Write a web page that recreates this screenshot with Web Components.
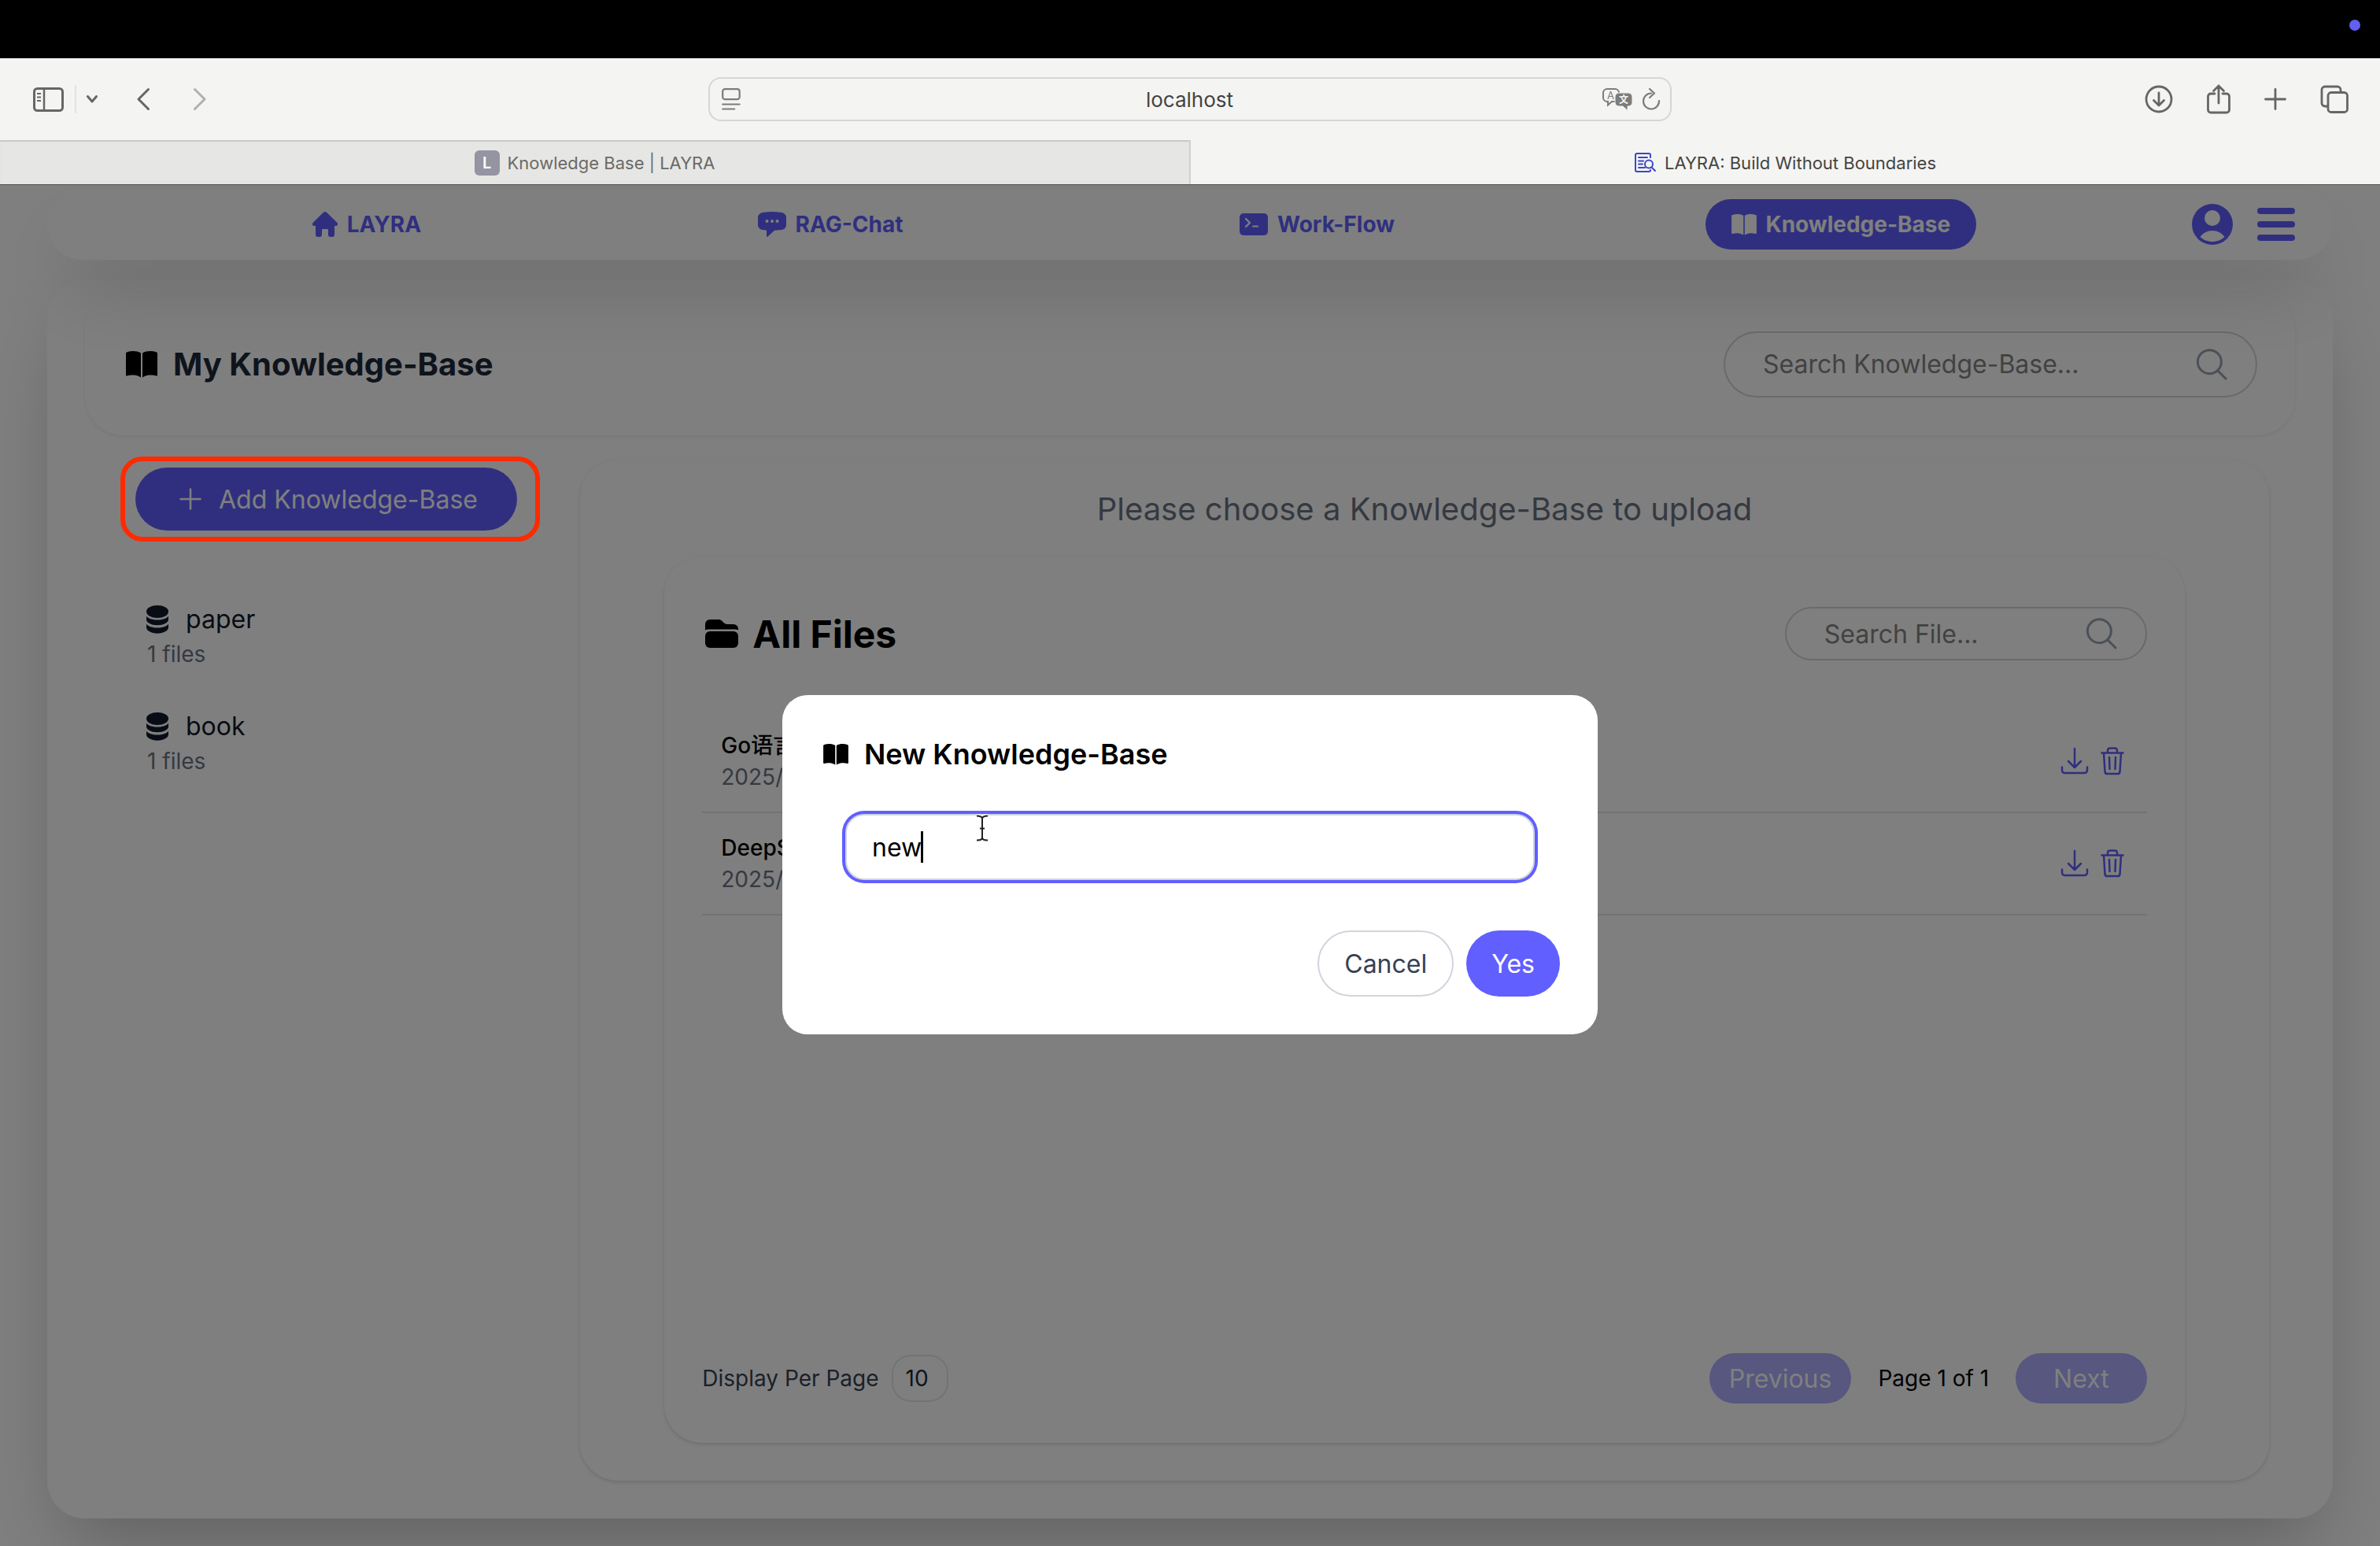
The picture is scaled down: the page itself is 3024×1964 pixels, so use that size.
<!DOCTYPE html>
<html lang="en">
<head>
<meta charset="utf-8">
<title>LAYRA: Build Without Boundaries</title>
<style>
  :root {
    --indigo: #615fff;
    --gray-200: #e5e7eb;
    --gray-300: #d1d5dc;
    --gray-400: #99a1af;
    --gray-500: #6a7282;
    --gray-700: #364153;
    --gray-800: #1e2939;
    --gray-900: #101828;
    --chrome: #f4f4f2;
    --card-shadow: 0 2px 6px rgba(0, 0, 0, 0.1), 0 2px 4px -2px rgba(0, 0, 0, 0.1);
    --deep-shadow: 0 50px 100px -24px rgba(0, 0, 0, 0.25);
  }
  body {
    margin: 0;
    font-family: Inter, "Noto Sans CJK SC", sans-serif;
    font-size: 32px;
    color: #000;
  }
</style>
</head>
<body>
<browser-window></browser-window>

<script>
// name: [width, height, svg body]
const ICONS = {
  sidebar: [40, 31, `<g fill="none" stroke="currentColor" stroke-width="3"><rect x="1.5" y="1.5" width="36" height="28" rx="4"/><path d="M14 2v27" stroke-width="2.5"/><path d="M5 8h5M5 12.500h5M5 17h5" stroke-width="2"/></g>`],
  chevron: [14, 10, `<path d="M1.500 1.500 7 8l5.500-6.500" fill="none" stroke="currentColor" stroke-width="3" stroke-linecap="round" stroke-linejoin="round"/>`],
  back: [16, 28, `<path d="M14.500 1.500 2 14l12.500 12.500" fill="none" stroke="currentColor" stroke-width="3" stroke-linecap="round" stroke-linejoin="round"/>`],
  forward: [16, 28, `<path d="M1.500 1.500 14 14 1.500 26.500" fill="none" stroke="currentColor" stroke-width="3" stroke-linecap="round" stroke-linejoin="round"/>`],
  reader: [24, 28, `<g fill="none" stroke="currentColor" stroke-width="2.200" stroke-linecap="round"><rect x="1.200" y="1.200" width="21.500" height="13" rx="3"/><path d="M1.200 20.500h21.500M1.200 26.500h15"/></g>`],
  translate: [38, 29, `<path d="M6 1h10a5 5 0 0 1 5 5v6a5 5 0 0 1-5 5h-4l-5 4.500V17H6a5 5 0 0 1-5-5V6a5 5 0 0 1 5-5z" fill="none" stroke="currentColor" stroke-width="2"/><text x="10.500" y="13.500" font-size="13" text-anchor="middle" fill="currentColor">A</text><path d="M21 6h12a5 5 0 0 1 5 5v7a5 5 0 0 1-5 5h-1v5.500L26 23h-5a5 5 0 0 1-5-5v-7a5 5 0 0 1 5-5z" fill="currentColor" stroke="#f4f4f2"/><text x="27" y="19" font-size="12" font-weight="700" text-anchor="middle" fill="#f4f4f2">文</text>`],
  reload: [24, 28, `<path d="M12 6.500A10 10 0 1 0 22 16M10 1l6 5.500-6 5.500" fill="none" stroke="currentColor" stroke-width="2.200" stroke-linecap="round" stroke-linejoin="round"/>`],
  downloads: [36, 36, `<g fill="none" stroke="currentColor" stroke-width="2.800" stroke-linecap="round" stroke-linejoin="round"><circle cx="18" cy="18" r="16"/><path d="M18 10v16M11.500 19.500 18 26l6.500-6.500"/></g>`],
  share: [30, 38, `<path d="M10 12H5a3.500 3.500 0 0 0-3.500 3.500v17A3.500 3.500 0 0 0 5 36h20a3.500 3.500 0 0 0 3.500-3.500v-17A3.500 3.500 0 0 0 25 12h-5M15 24V2M8.500 8.500 15 2l6.500 6.500" fill="none" stroke="currentColor" stroke-width="2.800" stroke-linecap="round" stroke-linejoin="round"/>`],
  add: [28, 28, `<path d="M14 1.500v25M1.500 14h25" fill="none" stroke="currentColor" stroke-width="2.800" stroke-linecap="round"/>`],
  tabs: [36, 36, `<g fill="none" stroke="currentColor" stroke-width="2.800"><path d="M10 27H6a4 4 0 0 1-4-4V6a4 4 0 0 1 4-4h16a4 4 0 0 1 4 4v3"/><rect x="10" y="9.500" width="24.500" height="25" rx="4"/></g>`],
  docSearch: [28, 26, `<g fill="none" stroke="currentColor" stroke-width="2" stroke-linecap="round" stroke-linejoin="round"><path d="M20 6V3a2 2 0 0 0-2-2H3a2 2 0 0 0-2 2v19a2 2 0 0 0 2 2h15a2 2 0 0 0 2-2"/><path d="M5 6h11M5 10.500h6M5 14.500h5M5 19h8"/><circle cx="18" cy="14.500" r="5"/><path d="m21.500 18.500 4.500 4.500"/></g>`],
  home: [32, 32, `<path d="M16 0c.9 0 1.600.4 2.300 1L31 13.500c2 2 1 4.500-1.400 4.500H28v11c0 2-1 3-3 3h-2c-2 0-3-1-3-3v-6c0-.6-.4-1-1-1h-6c-.6 0-1 .4-1 1v6c0 2-1 3-3 3H7c-2 0-3-1-3-3V18H2.400C0 18-1 15.500 1 13.500L13.700 1c.7-.6 1.400-1 2.300-1z" fill="currentColor"/>`],
  chat: [36, 32, `<path d="M6 1c8-1.300 16-1.300 24 0 3.500.6 6 3 6 6.500v9c0 3.500-2.500 6-6 6.500l-9 .8-8.500 7.700c-.8.700-1.500.2-1.500-.8V23.600L6 23c-3.500-.5-6-3-6-6.500v-9C0 4 2.500 1.600 6 1z" fill="currentColor"/><g fill="#fff"><circle cx="11.500" cy="12" r="2"/><circle cx="18" cy="12" r="2"/><circle cx="24.500" cy="12" r="2"/></g>`],
  terminal: [36, 28, `<rect width="36" height="28" rx="5" fill="currentColor"/><path d="m8 7 5 5-5 5M17 16.500h6" fill="none" stroke="#fff" stroke-width="2.200" stroke-linecap="round" stroke-linejoin="round"/>`],
  book: [40, 34, `<path d="M19 2.500v31C15.500 31 12 30.500 8 30.500c-2.500 0-4.500.4-6.500 1-1 .3-1.500-.2-1.500-1.200V3.500C0 2 .5 1.500 1.500 1.200 7.500-.6 14-.3 19 2.500zM21 2.500v31c3.500-2.500 7-3 11-3 2.500 0 4.500.4 6.500 1 1 .3 1.500-.2 1.500-1.200V3.500c0-1.500-.5-2-1.500-2.300C32.500-.6 26-.3 21 2.500z" fill="currentColor"/>`],
  user: [52, 52, `<circle cx="26" cy="26" r="26" fill="currentColor"/><circle cx="26" cy="18" r="10" fill="#fff"/><path d="M10.500 42C14 37 19.500 34 26 34s12 3 15.500 8c-4 3.800-9.500 6-15.500 6s-11.500-2.200-15.500-6z" fill="#fff"/>`],
  menu: [48, 42, `<g fill="currentColor"><rect width="48" height="8" rx="4"/><rect y="17" width="48" height="8" rx="4"/><rect y="34" width="48" height="8" rx="4"/></g>`],
  search: [48, 48, `<path d="m42 42-10.400-10.400A15 15 0 1 0 10.400 10.400a15 15 0 0 0 21.200 21.200z" fill="none" stroke="currentColor" stroke-width="3" stroke-linecap="round" stroke-linejoin="round"/>`],
  plus: [40, 40, `<path d="M20 7.500v25M7.500 20h25" fill="none" stroke="currentColor" stroke-width="2.500" stroke-linecap="round"/>`],
  database: [28, 36, `<g fill="currentColor"><ellipse cx="14" cy="8" rx="14" ry="8"/><path d="M0 13.500c2 3.200 7.500 5 14 5s12-1.800 14-5v4.500c0 4-6 7.200-14 7.200S0 22 0 18z"/><path d="M0 23.500c2 3.200 7.500 5 14 5s12-1.800 14-5V28c0 4-6 7.700-14 7.700S0 32 0 28z"/></g>`],
  folder: [42, 36, `<g fill="currentColor"><path d="M0 13.500V6a6 6 0 0 1 6-6h11c1.600 0 3 .6 4.200 1.800l2.600 2.500c1.100 1.100 2.600 1.700 4.200 1.700h8a6 6 0 0 1 6 6v1.500a8 8 0 0 0-4-1H4a8 8 0 0 0-4 1z"/><rect y="15" width="42" height="21" rx="6"/></g>`],
  download: [40, 40, `<path d="M4 27.500v4c0 2 1.500 3.500 3.500 3.500h25c2 0 3.500-1.500 3.500-3.500v-4M28 20l-8 8-8-8M20 27.500V4" fill="none" stroke="currentColor" stroke-width="2.500" stroke-linecap="round" stroke-linejoin="round"/>`],
  trash: [40, 40, `<g fill="none" stroke="currentColor" stroke-width="2.500" stroke-linecap="round" stroke-linejoin="round"><path d="M6.500 9.500h27M9 9.500l1.500 24c.2 1.700 1.200 2.500 2.800 2.500h13.400c1.600 0 2.600-.8 2.800-2.500l1.500-24M14 9V6.500c0-1.800 1-3 3-3h6c2 0 3 1.200 3 3V9"/><path d="m16 15 .5 15M24 15l-.5 15"/></g>`],
  ibeam: [20, 36, `<path d="M3 2.500c3.500 0 7 1 7 3.500 0-2.500 3.500-3.500 7-3.500M3 33.500c3.500 0 7-1 7-3.500 0 2.500 3.500 3.500 7 3.500M10 6v24M7 18.500h6" fill="none" stroke="#fff" stroke-width="5"/><path d="M3 2.500c3.500 0 7 1 7 3.500 0-2.500 3.500-3.500 7-3.500M3 33.500c3.500 0 7-1 7-3.500 0 2.500 3.500 3.500 7 3.500M10 6v24M7 18.500h6" fill="none" stroke="#222" stroke-width="2"/>`],
};

// Shared reset for everything that lives in a shadow root
const BASE = `
  * { box-sizing: border-box; }
  :host { box-sizing: border-box; }
  button, input, select { font: inherit; color: inherit; margin: 0; }
  button { border: none; background: transparent; padding: 0; cursor: pointer; display: inline-flex; align-items: center; }
  a { color: inherit; text-decoration: none; }
  h1, h2, p, ul { margin: 0; padding: 0; list-style: none; }
`;

class BaseElement extends HTMLElement {
  constructor() {
    super();
    this.attachShadow({ mode: "open" });
  }

  connectedCallback() {
    this.shadowRoot.innerHTML = `<style>${BASE}${this.styles()}</style>${this.markup()}`;
  }

  styles() {
    return "";
  }

  markup() {
    return "<slot></slot>";
  }
}

class UiIcon extends BaseElement {
  styles() {
    return `
      :host { display: inline-flex; flex: none; }
      svg { display: block; overflow: visible; }
    `;
  }

  markup() {
    const [w, h, body] = ICONS[this.getAttribute("name")];
    // "size" is the drawn width, the height keeps the ratio
    const width = Number(this.getAttribute("size")) || w;
    const height = Math.round((width * h) / w);
    return `<svg width="${width}" height="${height}" viewBox="0 0 ${w} ${h}" aria-hidden="true">${body}</svg>`;
  }
}

class BrowserToolbar extends BaseElement {
  styles() {
    return `
      :host {
        display: grid;
        grid-template-columns: 1fr 1224px 1fr;
        align-items: center;
        height: 104px;
        padding: 0 40px;
        background: var(--chrome);
        color: #666664;
      }
      .side { display: flex; align-items: center; gap: 50px; padding-left: 2px; }
      .side.right { justify-content: flex-end; gap: 43px; }
      .group { display: flex; align-items: center; gap: 13px; }
      .group.history { gap: 56px; }
      .bar { width: 2px; height: 36px; background: #e2e2e0; }
      .off { color: #b0b0ae; }
      .url {
        display: flex;
        align-items: center;
        height: 56px;
        padding: 0 12px 0 15px;
        border: 2px solid #d6d6d4;
        border-radius: 16px;
        color: #7c7c7a;
      }
      .url input {
        flex: 1;
        min-width: 0;
        margin-left: 46px;
        border: none;
        outline: none;
        background: transparent;
        text-align: center;
        font-size: 26px;
        color: #444442;
      }
      .url button + button { margin-left: 12px; }
    `;
  }

  markup() {
    return `
      <div class="side">
        <div class="group">
          <button aria-label="Show sidebar"><ui-icon name="sidebar"></ui-icon></button>
          <span class="bar"></span>
          <button aria-label="Tab groups"><ui-icon name="chevron"></ui-icon></button>
        </div>
        <div class="group history">
          <button aria-label="Back"><ui-icon name="back"></ui-icon></button>
          <button class="off" aria-label="Forward"><ui-icon name="forward"></ui-icon></button>
        </div>
      </div>
      <div class="url">
        <button aria-label="Page settings"><ui-icon name="reader"></ui-icon></button>
        <input type="text" aria-label="Address" value="localhost">
        <button aria-label="Translate"><ui-icon name="translate"></ui-icon></button>
        <button aria-label="Reload"><ui-icon name="reload"></ui-icon></button>
      </div>
      <div class="side right">
        <button aria-label="Downloads"><ui-icon name="downloads"></ui-icon></button>
        <button aria-label="Share"><ui-icon name="share"></ui-icon></button>
        <button aria-label="New tab"><ui-icon name="add"></ui-icon></button>
        <button aria-label="Tab overview"><ui-icon name="tabs"></ui-icon></button>
      </div>
    `;
  }
}

class BrowserTab extends BaseElement {
  styles() {
    return `
      :host {
        display: flex;
        flex: 1;
        align-items: center;
        justify-content: center;
        gap: 10px;
        padding-top: 2px;
        font-size: 22px;
        color: #444442;
        background: var(--chrome);
      }
      :host([inactive]) {
        color: #6a6a68;
        background: #e6e6e4;
        border-right: 2px solid #d2d2d0;
        box-shadow: inset 0 2px 1px #c8c8c6;
      }
    `;
  }

  markup() {
    return `<slot name="icon"></slot><span><slot></slot></span>`;
  }
}

class AppNav extends BaseElement {
  styles() {
    return `
      :host {
        position: relative;
        z-index: 1;
        display: flex;
        align-items: center;
        height: 90px;
        margin: 5px 60px 0;
        padding: 0 48px 0 123px;
        border-radius: 48px;
        background: #fff;
        box-shadow: var(--deep-shadow);
        color: var(--indigo);
      }
      nav {
        display: flex;
        flex: 1;
        justify-content: space-around;
        margin-right: 93px;
        font-size: 28px;
        font-weight: 700;
      }
      a {
        display: flex;
        align-items: center;
        gap: 12px;
        height: 64px;
        padding: 0 33px;
        border-radius: 32px;
      }
      a[aria-current] { background: var(--indigo); color: #fff; }
      .tools { display: flex; align-items: center; gap: 31px; }
    `;
  }

  markup() {
    return `
      <nav>
        <a href="#layra"><ui-icon name="home"></ui-icon>LAYRA</a>
        <a href="#rag-chat"><ui-icon name="chat"></ui-icon>RAG-Chat</a>
        <a href="#work-flow"><ui-icon name="terminal"></ui-icon>Work-Flow</a>
        <a href="#knowledge-base" aria-current="page"><ui-icon name="book" size="32"></ui-icon>Knowledge-Base</a>
      </nav>
      <div class="tools">
        <button aria-label="Account"><ui-icon name="user"></ui-icon></button>
        <button aria-label="Menu"><ui-icon name="menu"></ui-icon></button>
      </div>
    `;
  }
}

class SearchBox extends BaseElement {
  styles() {
    return `
      :host {
        display: flex;
        align-items: center;
        height: 84px;
        padding: 0 32px 0 48px;
        border: 2px solid var(--gray-300);
        border-radius: 42px;
        color: var(--gray-400);
      }
      :host([small]) { height: 68px; border-radius: 34px; }
      input {
        flex: 1;
        min-width: 0;
        padding: 0;
        border: none;
        outline: none;
        background: transparent;
        color: #000;
      }
      input::placeholder { color: #848484; opacity: 1; }
    `;
  }

  markup() {
    const hint = this.getAttribute("placeholder");
    return `
      <input type="text" placeholder="${hint}" aria-label="${hint}">
      <ui-icon name="search"></ui-icon>
    `;
  }
}

class PageHeader extends BaseElement {
  styles() {
    return `
      :host {
        display: flex;
        align-items: center;
        justify-content: space-between;
        height: 181px;
        padding: 0 48px 0 52px;
        border-radius: 48px;
        background: #fff;
        box-shadow: 0 2px 4px rgba(0, 0, 0, 0.07);
      }
      h1 {
        display: flex;
        align-items: center;
        gap: 20px;
        font-size: 40px;
        font-weight: 700;
        color: var(--gray-800);
      }
      ui-icon { color: #000; }
      search-box { width: 678px; }
    `;
  }

  markup() {
    return `
      <h1><ui-icon name="book"></ui-icon>My Knowledge-Base</h1>
      <search-box placeholder="Search Knowledge-Base..."></search-box>
    `;
  }
}

class BaseItem extends BaseElement {
  styles() {
    return `
      :host { display: block; padding-left: 14px; color: var(--gray-900); }
      .name { display: flex; align-items: center; gap: 22px; line-height: 48px; }
      .count { padding-left: 1px; font-size: 28px; line-height: 40px; color: var(--gray-500); }
    `;
  }

  markup() {
    return `
      <div class="name"><ui-icon name="database"></ui-icon><slot></slot></div>
      <div class="count">${this.getAttribute("files")} files</div>
    `;
  }
}

class KbSidebar extends BaseElement {
  styles() {
    return `
      :host { display: block; width: 629px; padding: 10px 0 0 64px; }
      .add { position: relative; display: inline-flex; }
      .add button {
        gap: 16px;
        height: 80px;
        padding: 0 50px;
        border-radius: 40px;
        background: var(--indigo);
        color: #fff;
      }
      /* Marker sits above the dimmed page */
      .mark {
        position: absolute;
        z-index: 20;
        inset: -14px -29px -14px -19px;
        border: 6px solid #ff2a00;
        border-radius: 28px;
        pointer-events: none;
      }
      ul { display: grid; gap: 48px; margin-top: 89px; }
    `;
  }

  markup() {
    return `
      <div class="add">
        <button><ui-icon name="plus"></ui-icon>Add Knowledge-Base</button>
        <span class="mark"></span>
      </div>
      <ul>
        <li><base-item files="1">paper</base-item></li>
        <li><base-item files="1">book</base-item></li>
      </ul>
    `;
  }
}

class FileRow extends BaseElement {
  styles() {
    return `
      :host {
        display: flex;
        align-items: center;
        justify-content: space-between;
        padding: 24px;
        border-bottom: 2px solid var(--gray-200);
        font-size: 28px;
        line-height: 40px;
      }
      .name { font-weight: 500; }
      .date { color: var(--gray-500); }
      .actions { display: flex; gap: 8px; color: var(--indigo); }
    `;
  }

  markup() {
    return `
      <div>
        <div class="name"><slot></slot></div>
        <div class="date">${this.getAttribute("date")}</div>
      </div>
      <div class="actions">
        <button aria-label="Download"><ui-icon name="download"></ui-icon></button>
        <button aria-label="Delete"><ui-icon name="trash"></ui-icon></button>
      </div>
    `;
  }
}

class FilePanel extends BaseElement {
  styles() {
    return `
      :host {
        display: flex;
        flex-direction: column;
        flex: 1;
        align-items: center;
        padding: 35px 0 48px;
        border-radius: 48px;
        background: #fff;
        box-shadow: var(--card-shadow);
      }
      .hint { font-size: 40px; line-height: 56px; color: var(--gray-500); }
      .card {
        display: flex;
        flex-direction: column;
        flex: 1;
        width: 90%;
        margin-top: 32px;
        padding: 64px 48px 50px;
        border-radius: 48px;
        background: #fff;
        box-shadow: var(--card-shadow);
      }
      header { display: flex; align-items: center; justify-content: space-between; margin-bottom: 64px; }
      h2 { display: flex; align-items: center; gap: 18px; padding-left: 4px; font-size: 48px; font-weight: 700; }
      search-box { width: 460px; }
      footer { display: flex; align-items: center; justify-content: space-between; margin-top: auto; font-size: 28px; }
      label { display: flex; align-items: center; gap: 16px; color: var(--gray-700); }
      select {
        appearance: none;
        width: 72px;
        height: 60px;
        padding: 0 16px;
        border: 2px solid var(--gray-200);
        border-radius: 24px;
        background: transparent;
        color: var(--gray-800);
      }
      .pager { display: flex; align-items: center; gap: 34px; }
      .pager button {
        height: 64px;
        padding: 0 25px;
        border-radius: 32px;
        background: var(--indigo);
        color: #fff;
        font-size: 32px;
        opacity: 0.5;
      }
      .pager .next { padding: 0 48px; }
    `;
  }

  markup() {
    return `
      <p class="hint">Please choose a Knowledge-Base to upload</p>
      <section class="card">
        <header>
          <h2><ui-icon name="folder"></ui-icon>All Files</h2>
          <search-box small placeholder="Search File..."></search-box>
        </header>
        <slot></slot>
        <footer>
          <label>Display Per Page
            <select><option>10</option></select>
          </label>
          <div class="pager">
            <button disabled>Previous</button>
            <span>Page 1 of 1</span>
            <button class="next" disabled>Next</button>
          </div>
        </footer>
      </section>
    `;
  }
}

class NewBaseDialog extends BaseElement {
  styles() {
    return `
      :host {
        position: absolute;
        z-index: 10;
        inset: 0;
        display: flex;
        align-items: center;
        justify-content: center;
        padding-bottom: 2px;
        background: rgba(0, 0, 0, 0.5);
      }
      .dialog { width: 1036px; padding: 47px 48px 48px; border-radius: 32px; background: #fff; }
      h2 {
        display: flex;
        align-items: center;
        gap: 20px;
        padding-left: 4px;
        font-size: 36px;
        font-weight: 600;
        line-height: 56px;
      }
      .field { position: relative; margin: 48px 32px 64px; }
      .field input {
        display: block;
        width: 100%;
        height: 84px;
        padding: 0 32px;
        border: 2px solid var(--gray-300);
        border-radius: 24px;
        outline: none;
        box-shadow: 0 0 0 4px var(--indigo);
      }
      .caret { position: absolute; left: 96px; top: 22px; width: 3px; height: 40px; background: #000; }
      .pointer { position: absolute; left: 164px; top: 0; }
      .buttons { display: flex; justify-content: flex-end; gap: 16px; }
      .buttons button { height: 84px; padding: 0 32px; border-radius: 42px; }
      .buttons .cancel { border: 2px solid var(--gray-300); color: var(--gray-700); }
      .buttons .yes { background: var(--indigo); color: #fff; }
    `;
  }

  markup() {
    return `
      <div class="dialog" role="dialog" aria-labelledby="title">
        <h2 id="title"><ui-icon name="book" size="32"></ui-icon>New Knowledge-Base</h2>
        <div class="field">
          <input type="text" value="new" aria-labelledby="title">
          <span class="caret"></span>
          <ui-icon class="pointer" name="ibeam"></ui-icon>
        </div>
        <div class="buttons">
          <button class="cancel">Cancel</button>
          <button class="yes">Yes</button>
        </div>
      </div>
    `;
  }
}

class KbPage extends BaseElement {
  styles() {
    return `
      :host {
        position: relative;
        display: flex;
        flex-direction: column;
        flex: 1;
        overflow: hidden;
        background: #fff;
      }
      main {
        display: flex;
        flex-direction: column;
        flex: 1;
        gap: 31px;
        margin: 26px 60px 35px;
        padding: 16px 48px 48px;
        border-radius: 48px;
        background: #fff;
        box-shadow: var(--deep-shadow);
      }
      .content { display: flex; flex: 1; padding-right: 33px; }
    `;
  }

  markup() {
    return `
      <app-nav></app-nav>
      <main>
        <page-header></page-header>
        <div class="content">
          <kb-sidebar></kb-sidebar>
          <file-panel>
            <file-row date="2025/">Go语言</file-row>
            <file-row date="2025/">DeepS</file-row>
          </file-panel>
        </div>
      </main>
      <new-base-dialog></new-base-dialog>
    `;
  }
}

class BrowserWindow extends BaseElement {
  styles() {
    return `
      :host { display: flex; flex-direction: column; min-height: 100vh; }
      .menubar {
        display: flex;
        justify-content: flex-end;
        height: 74px;
        padding: 25px 25px 0 0;
        background: #000;
      }
      .dot { width: 14px; height: 14px; border-radius: 50%; background: #6260f0; }
      .tabs { display: flex; height: 57px; border-bottom: 1px solid #555553; }
      .badge {
        display: grid;
        place-items: center;
        width: 32px;
        height: 32px;
        border-radius: 6px;
        background: #9494a2;
        color: #fff;
        font-size: 20px;
        font-weight: 600;
      }
      .fav { color: #3c46c8; }
    `;
  }

  markup() {
    return `
      <div class="menubar"><span class="dot"></span></div>
      <browser-toolbar></browser-toolbar>
      <div class="tabs">
        <browser-tab inactive><span class="badge" slot="icon">L</span>Knowledge Base | LAYRA</browser-tab>
        <browser-tab><ui-icon class="fav" name="docSearch" slot="icon"></ui-icon>LAYRA: Build Without Boundaries</browser-tab>
      </div>
      <kb-page></kb-page>
    `;
  }
}

customElements.define("ui-icon", UiIcon);
customElements.define("browser-toolbar", BrowserToolbar);
customElements.define("browser-tab", BrowserTab);
customElements.define("app-nav", AppNav);
customElements.define("search-box", SearchBox);
customElements.define("page-header", PageHeader);
customElements.define("base-item", BaseItem);
customElements.define("kb-sidebar", KbSidebar);
customElements.define("file-row", FileRow);
customElements.define("file-panel", FilePanel);
customElements.define("new-base-dialog", NewBaseDialog);
customElements.define("kb-page", KbPage);
customElements.define("browser-window", BrowserWindow);
</script>
</body>
</html>
